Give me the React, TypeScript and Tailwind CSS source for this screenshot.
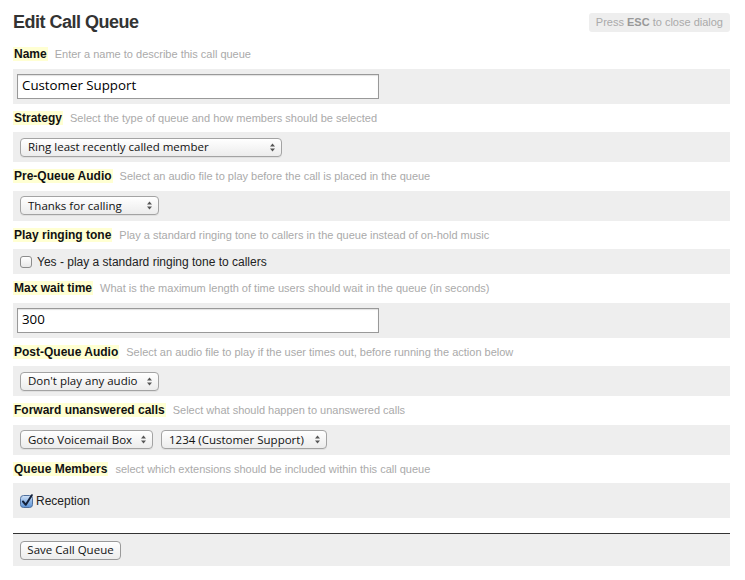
import type { ReactNode } from "react";

function Label({ title, hint }: { title: string; hint: string }) {
  return (
    <div className="h-[28.5px] pt-[7px]">
      <div className="flex items-baseline">
        <span className="bg-[#ffffd2] px-[1px] text-[12px] leading-[14px] font-bold text-[#111]">{title}</span>
        <span className="ml-[7px] text-[11px] leading-[14px] text-[#aaa]">{hint}</span>
      </div>
    </div>
  );
}

function Row({ children, className }: { children: ReactNode; className: string }) {
  return <div className={"bg-[#eee] flex items-center " + className}>{children}</div>;
}

function Arrows() {
  return (
    <svg width="5" height="9" viewBox="0 0 5 9" className="shrink-0">
      <path d="M0 3.6 L2.5 0.6 L5 3.6 Z" fill="#555" />
      <path d="M0 5.4 L2.5 8.4 L5 5.4 Z" fill="#555" />
    </svg>
  );
}

function Select({ value, width }: { value: string; width: string }) {
  return (
    <div
      className={
        "flex items-center justify-between h-[19px] rounded-[4px] border border-[#a3a3a3] bg-linear-to-b from-white to-[#ececec] pl-[7px] pr-[6px] font-['Open_Sans',sans-serif] text-[11.5px] text-[#111] shadow-[0_1px_0_rgba(0,0,0,0.06)] " +
        width
      }
    >
      <span className="whitespace-nowrap">{value}</span>
      <Arrows />
    </div>
  );
}

function TextBox({ value }: { value: string }) {
  return (
    <div className="w-[362px] h-[25px] border border-[#999] bg-white flex items-center pl-[4px] font-['Open_Sans',sans-serif] text-[13.3px] text-black shadow-[inset_0_1px_1px_rgba(0,0,0,0.12)]">
      {value}
    </div>
  );
}

function CheckedBox() {
  return (
    <svg width="14" height="14" viewBox="0 0 14 14" className="shrink-0">
      <defs>
        <linearGradient id="cb" x1="0" y1="0" x2="0" y2="1">
          <stop offset="0" stopColor="#d3e3f7" />
          <stop offset="0.5" stopColor="#8fb6e6" />
          <stop offset="1" stopColor="#5d93d6" />
        </linearGradient>
      </defs>
      <rect x="0.5" y="1.5" width="12" height="12" rx="3" fill="url(#cb)" stroke="#4f6f9c" />
      <path d="M3 7.5 L5.8 10.8 L11.8 1.2" fill="none" stroke="#13213b" strokeWidth="2" strokeLinecap="round" strokeLinejoin="round" />
    </svg>
  );
}

export default function App() {
  return (
    <div className="w-[745px] h-[580px] bg-white px-[13px] pr-[15px] font-['Liberation_Sans',Arial,sans-serif]">
      <div className="h-[40px] pt-[11px] flex justify-between items-start">
        <h1 className="text-[18px] leading-[22px] font-bold tracking-[-0.5px] text-[#333]">Edit Call Queue</h1>
        <div className="mt-[2px] h-[19px] px-[7px] rounded-[3px] bg-[#eee] text-[11px] leading-[19px] text-[#aaa] whitespace-nowrap">
          Press <b className="text-[#999]">ESC</b> to close dialog
        </div>
      </div>

      <Label title="Name" hint="Enter a name to describe this call queue" />
      <Row className="h-[35px] pl-[4px]">
        <TextBox value="Customer Support" />
      </Row>

      <Label title="Strategy" hint="Select the type of queue and how members should be selected" />
      <Row className="h-[30px] pl-[7px]">
        <Select value="Ring least recently called member" width="w-[262px]" />
      </Row>

      <Label title="Pre-Queue Audio" hint="Select an audio file to play before the call is placed in the queue" />
      <Row className="h-[30px] pl-[7px]">
        <Select value="Thanks for calling" width="w-[139px]" />
      </Row>

      <Label title="Play ringing tone" hint="Play a standard ringing tone to callers in the queue instead of on-hold music" />
      <Row className="h-[25px] pl-[7px]">
        <span className="w-[12px] h-[12px] rounded-[3px] border border-[#8c8c8c] bg-linear-to-b from-white to-[#e8e8e8]" />
        <span className="ml-[5px] text-[12px] text-[#222]">Yes - play a standard ringing tone to callers</span>
      </Row>

      <Label title="Max wait time" hint="What is the maximum length of time users should wait in the queue (in seconds)" />
      <Row className="h-[35px] pl-[4px]">
        <TextBox value="300" />
      </Row>

      <Label title="Post-Queue Audio" hint="Select an audio file to play if the user times out, before running the action below" />
      <Row className="h-[30px] pl-[7px]">
        <Select value="Don't play any audio" width="w-[139px]" />
      </Row>

      <Label title="Forward unanswered calls" hint="Select what should happen to unanswered calls" />
      <Row className="h-[30px] pl-[7px] gap-[8px]">
        <Select value="Goto Voicemail Box" width="w-[133px]" />
        <Select value="1234 (Customer Support)" width="w-[166px]" />
      </Row>

      <Label title="Queue Members" hint="select which extensions should be included within this call queue" />
      <Row className="h-[35px] pl-[7px]">
        <CheckedBox />
        <span className="ml-[2px] text-[12px] text-[#222]">Reception</span>
      </Row>

      <div className="mt-[14.5px] border-t border-[#333] bg-[#eee] h-[33px] pt-[7px] pl-[7px]">
        <div className="w-[101px] h-[19px] rounded-[4px] border border-[#9a9a9a] bg-linear-to-b from-white to-[#ececec] flex items-center justify-center font-['Open_Sans',sans-serif] text-[11.5px] text-[#111]">
          Save Call Queue
        </div>
      </div>
    </div>
  );
}
